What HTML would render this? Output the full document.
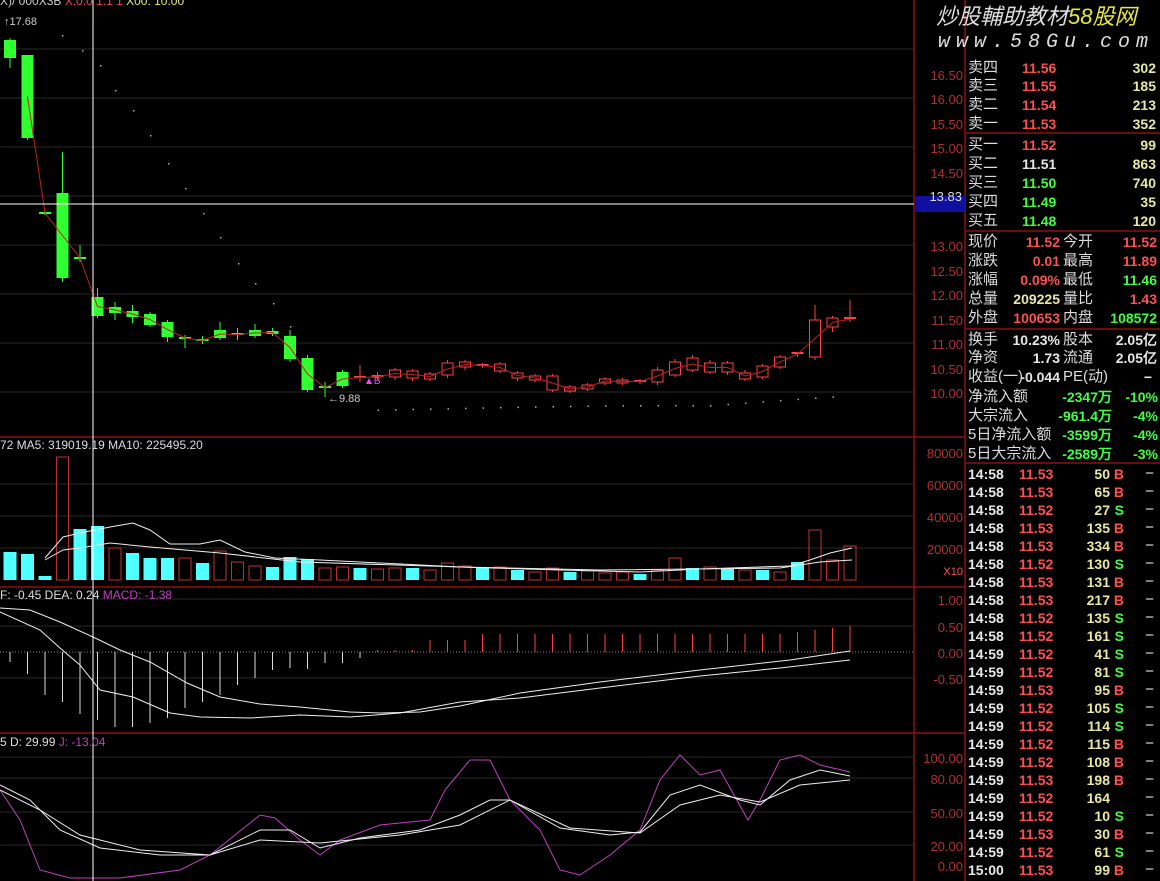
<!DOCTYPE html>
<html><head><meta charset="utf-8">
<style>
body{margin:0;background:#000;width:1160px;height:881px;overflow:hidden;position:relative;font-family:"Liberation Sans","Noto Sans CJK SC",sans-serif;}
.t{position:absolute;white-space:nowrap;line-height:1;}
.ax{position:absolute;right:197px;font-size:13px;color:#b03030;text-align:right;}
.rp{position:absolute;left:966px;width:194px;font-size:15px;}
.row{position:absolute;left:0;width:194px;height:18px;}
.row span{position:absolute;top:0px;white-space:nowrap;line-height:18px;}
.l{left:2px;color:#ddd;}
.w{color:#e8e8e8}.r{color:#ff5050}.g{color:#40ff40}.y{color:#e8e8a0}
.b{font-weight:bold;font-size:14px;font-family:"Liberation Sans",sans-serif}
</style></head><body>
<svg id="s" width="1160" height="881" style="position:absolute;left:0;top:0">
<g stroke="#2a2a2a">
<line x1="0" y1="49" x2="914" y2="49"/><line x1="0" y1="98" x2="914" y2="98"/><line x1="0" y1="147" x2="914" y2="147"/><line x1="0" y1="196" x2="914" y2="196"/><line x1="0" y1="245" x2="914" y2="245"/><line x1="0" y1="294" x2="914" y2="294"/><line x1="0" y1="343" x2="914" y2="343"/><line x1="0" y1="392" x2="914" y2="392"/>
<line x1="0" y1="484" x2="914" y2="484"/><line x1="0" y1="516" x2="914" y2="516"/><line x1="0" y1="548" x2="914" y2="548"/>
<line x1="0" y1="599" x2="914" y2="599"/><line x1="0" y1="626" x2="914" y2="626"/><line x1="0" y1="678" x2="914" y2="678"/>
<line x1="0" y1="757" x2="914" y2="757"/><line x1="0" y1="778" x2="914" y2="778"/><line x1="0" y1="812" x2="914" y2="812"/><line x1="0" y1="845" x2="914" y2="845"/>
</g>
<g stroke="#8a1010" stroke-width="1.5">
<line x1="0" y1="437" x2="965" y2="437"/><line x1="0" y1="587" x2="965" y2="587"/><line x1="0" y1="733" x2="965" y2="733"/>
<line x1="914" y1="0" x2="914" y2="881"/><line x1="965" y1="0" x2="965" y2="881"/>
<line x1="965" y1="133" x2="1160" y2="133"/><line x1="965" y1="231" x2="1160" y2="231"/><line x1="965" y1="329" x2="1160" y2="329"/><line x1="965" y1="463" x2="1160" y2="463"/>
</g>
<line x1="0" y1="652" x2="914" y2="652" stroke="#888" stroke-dasharray="1,2"/>
<g id="c"></g>
<line x1="93" y1="0" x2="93" y2="881" stroke="#fff"/>
<line x1="0" y1="204" x2="914" y2="204" stroke="#fff"/>
<rect x="915" y="196" width="50" height="16" fill="#1010a0"/>
</svg>
<div class="t" style="left:0;top:-5px;font-size:12px;color:#ccc">X)/ 000X3B <span style="color:#ff4060">X:0.0 1.1 1</span> <span style="color:#e8e870">X00: 10.00</span></div>
<div class="t" style="left:4px;top:17px;font-size:11px;color:#ccc">↑17.68</div>
<div class="t" style="left:328px;top:394px;font-size:11px;color:#ccc">←9.88</div>
<div class="t" style="left:0;top:439px;font-size:12px;color:#ddd">72 MA5: 319019.19 MA10: 225495.20</div>
<div class="t" style="left:0;top:589px;font-size:12px;color:#ddd">F: -0.45 DEA: 0.24 <span style="color:#c040c0">MACD: -1.38</span></div>
<div class="t" style="left:0;top:736px;font-size:12px;color:#ddd">5 D: 29.99 <span style="color:#c040c0">J: -13.04</span></div>
<div class="t" style="left:364px;top:377px;font-size:10px;color:#ff40ff">▲<span style="color:#ff40ff">B</span></div>
<div class="ax" style="top:68px">16.50</div><div class="ax" style="top:92px">16.00</div><div class="ax" style="top:117px">15.50</div><div class="ax" style="top:141px">15.00</div><div class="ax" style="top:166px">14.50</div>
<div class="ax" style="top:189px;color:#ddd;right:198px">13.83</div>
<div class="ax" style="top:239px">13.00</div><div class="ax" style="top:264px">12.50</div><div class="ax" style="top:288px">12.00</div><div class="ax" style="top:313px">11.50</div><div class="ax" style="top:337px">11.00</div><div class="ax" style="top:362px">10.50</div><div class="ax" style="top:386px">10.00</div>
<div class="ax" style="top:446px">80000</div><div class="ax" style="top:478px">60000</div><div class="ax" style="top:510px">40000</div><div class="ax" style="top:542px">20000</div>
<div class="ax" style="top:566px;color:#ff5050;font-size:11px">X10</div>
<div class="ax" style="top:593px">1.00</div><div class="ax" style="top:620px">0.50</div><div class="ax" style="top:646px">0.00</div><div class="ax" style="top:672px">-0.50</div>
<div class="ax" style="top:751px">100.00</div><div class="ax" style="top:772px">80.00</div><div class="ax" style="top:806px">50.00</div><div class="ax" style="top:839px">20.00</div><div class="ax" style="top:859px">0.00</div>
<div class="t" style="left:936px;top:6px;font-size:22px;font-style:italic;color:#ddd">炒股輔助教材<span style="color:#e8e840">58股网</span></div>
<div class="t" style="left:938px;top:33px;font-size:20px;font-style:italic;color:#ddd;letter-spacing:6px;font-family:'Liberation Mono',monospace">www.58Gu.com</div>
<div class="rp" style="top:0;height:881px">
<div class="row" style="top:59px"><span class="l">卖四</span><span class="r b" style="left:56px">11.56</span><span class="y b" style="right:4px">302</span></div>
<div class="row" style="top:77px"><span class="l">卖三</span><span class="r b" style="left:56px">11.55</span><span class="y b" style="right:4px">185</span></div>
<div class="row" style="top:96px"><span class="l">卖二</span><span class="r b" style="left:56px">11.54</span><span class="y b" style="right:4px">213</span></div>
<div class="row" style="top:115px"><span class="l">卖一</span><span class="r b" style="left:56px">11.53</span><span class="y b" style="right:4px">352</span></div>
<div class="row" style="top:136px"><span class="l">买一</span><span class="r b" style="left:56px">11.52</span><span class="y b" style="right:4px">99</span></div>
<div class="row" style="top:155px"><span class="l">买二</span><span class="w b" style="left:56px">11.51</span><span class="y b" style="right:4px">863</span></div>
<div class="row" style="top:174px"><span class="l">买三</span><span class="g b" style="left:56px">11.50</span><span class="y b" style="right:4px">740</span></div>
<div class="row" style="top:193px"><span class="l">买四</span><span class="g b" style="left:56px">11.49</span><span class="y b" style="right:4px">35</span></div>
<div class="row" style="top:212px"><span class="l">买五</span><span class="g b" style="left:56px">11.48</span><span class="y b" style="right:4px">120</span></div>
<div class="row" style="top:233px"><span class="l">现价</span><span class="r b" style="right:100px">11.52</span><span class="l" style="left:97px">今开</span><span class="r b" style="right:3px">11.52</span></div>
<div class="row" style="top:252px"><span class="l">涨跌</span><span class="r b" style="right:100px">0.01</span><span class="l" style="left:97px">最高</span><span class="r b" style="right:3px">11.89</span></div>
<div class="row" style="top:271px"><span class="l">涨幅</span><span class="r b" style="right:100px">0.09%</span><span class="l" style="left:97px">最低</span><span class="g b" style="right:3px">11.46</span></div>
<div class="row" style="top:290px"><span class="l">总量</span><span class="y b" style="right:100px">209225</span><span class="l" style="left:97px">量比</span><span class="r b" style="right:3px">1.43</span></div>
<div class="row" style="top:309px"><span class="l">外盘</span><span class="r b" style="right:100px">100653</span><span class="l" style="left:97px">内盘</span><span class="g b" style="right:3px">108572</span></div>
<div class="row" style="top:331px"><span class="l">换手</span><span class="w b" style="right:100px">10.23%</span><span class="l" style="left:97px">股本</span><span class="w b" style="right:3px">2.05亿</span></div>
<div class="row" style="top:349px"><span class="l">净资</span><span class="w b" style="right:100px">1.73</span><span class="l" style="left:97px">流通</span><span class="w b" style="right:3px">2.05亿</span></div>
<div class="row" style="top:368px"><span class="l">收益(一)</span><span class="w b" style="right:100px">-0.044</span><span class="l" style="left:97px">PE(动)</span><span class="w b" style="right:8px">−</span></div>
<div class="row" style="top:388px"><span class="l">净流入额</span><span class="g b" style="right:48px">-2347万</span><span class="g b" style="right:2px">-10%</span></div>
<div class="row" style="top:407px"><span class="l">大宗流入</span><span class="g b" style="right:48px">-961.4万</span><span class="g b" style="right:2px">-4%</span></div>
<div class="row" style="top:426px"><span class="l">5日净流入额</span><span class="g b" style="right:48px">-3599万</span><span class="g b" style="right:2px">-4%</span></div>
<div class="row" style="top:445px"><span class="l">5日大宗流入</span><span class="g b" style="right:48px">-2589万</span><span class="g b" style="right:2px">-3%</span></div>
<div id="ticks"></div>
</div>
<script>
var T=[["14:58","11.53","50","B"],["14:58","11.53","65","B"],["14:58","11.52","27","S"],["14:58","11.53","135","B"],["14:58","11.53","334","B"],["14:58","11.52","130","S"],["14:58","11.53","131","B"],["14:58","11.53","217","B"],["14:58","11.52","135","S"],["14:58","11.52","161","S"],["14:59","11.52","41","S"],["14:59","11.52","81","S"],["14:59","11.53","95","B"],["14:59","11.52","105","S"],["14:59","11.52","114","S"],["14:59","11.52","115","B"],["14:59","11.52","108","B"],["14:59","11.53","198","B"],["14:59","11.52","164",""],["14:59","11.52","10","S"],["14:59","11.53","30","B"],["14:59","11.52","61","S"],["15:00","11.53","99","B"]];
var h="";T.forEach(function(r,i){var y=465+i*18;h+='<div class="row" style="top:'+y+'px"><span class="w b" style="left:2px">'+r[0]+'</span><span class="r b" style="left:53px">'+r[1]+'</span><span class="y b" style="right:50px">'+r[2]+'</span><span class="b '+(r[3]=="B"?"r":"g")+'" style="right:36px">'+r[3]+'</span><span class="w" style="right:6px">−</span></div>';});
document.getElementById("ticks").innerHTML=h;
var C=[[40,58,38,68,'g'],[55,138,55,140,'g'],[213,213,211,215,'d'],[193,278,152,282,'g'],[258,258,245,262,'d'],[297,316,288,318,'g'],[307,313,302,320,'g'],[311,317,305,323,'g'],[314,325,312,327,'g'],[322,337,320,342,'g'],[338,338,335,348,'d'],[340,341,336,344,'d'],[330,338,322,340,'g'],[334,335,328,340,'d'],[330,336,324,338,'g'],[331,334,328,336,'g'],[336,359,330,362,'g'],[358,390,355,392,'g'],[387,388,382,397,'d'],[372,386,370,388,'g'],[377,378,365,382,'dr'],[376,378,372,380,'dr'],[370,377,368,380,'r'],[371,378,369,381,'r'],[374,379,372,381,'r'],[363,375,360,378,'r'],[362,367,360,370,'r'],[365,366,363,368,'dr'],[364,371,362,373,'r'],[373,378,371,381,'r'],[376,380,374,382,'r'],[376,390,374,392,'r'],[387,391,385,393,'r'],[385,389,383,391,'r'],[379,383,377,385,'r'],[380,383,378,385,'r'],[381,382,379,384,'dr'],[370,382,367,385,'r'],[362,375,359,377,'r'],[358,370,355,372,'r'],[363,372,360,374,'r'],[363,372,361,375,'r'],[373,379,370,381,'r'],[366,377,364,379,'r'],[357,367,355,369,'r'],[353,355,352,357,'dr'],[320,357,305,360,'r'],[318,327,316,332,'r'],[318,320,300,322,'dr']];
var V=[552,554,576,457,529,526,548,553,558,558,558,563,551,562,566,567,557,559,568,567,568,569,568,568,570,563,566,568,567,570,572,568,572,571,573,572,574,570,558,568,567,569,570,570,572,562,530,560,546];
var Vt="cccrccrcccrcrrrcccrrcrrcrrrcrcrrcrrrcrrcrcrcrcrrr";
var s="";function X(i){return 10+i*17.5;}
C.forEach(function(c,i){var x=X(i);
 if(c[4]=='g'){s+='<line x1="'+x+'" y1="'+c[2]+'" x2="'+x+'" y2="'+c[3]+'" stroke="#30ff30"/><rect x="'+(x-6)+'" y="'+c[0]+'" width="12" height="'+(c[1]-c[0])+'" fill="#30ff30"/>';}
 else if(c[4]=='r'){s+='<line x1="'+x+'" y1="'+c[2]+'" x2="'+x+'" y2="'+c[0]+'" stroke="#ff4040"/><line x1="'+x+'" y1="'+c[1]+'" x2="'+x+'" y2="'+c[3]+'" stroke="#ff4040"/><rect x="'+(x-5.5)+'" y="'+c[0]+'" width="11" height="'+(c[1]-c[0])+'" fill="none" stroke="#ff4040"/>';}
 else {var col=c[4]=='dr'?'#ff4040':'#30ff30';s+='<line x1="'+x+'" y1="'+c[2]+'" x2="'+x+'" y2="'+c[3]+'" stroke="'+col+'"/><line x1="'+(x-6)+'" y1="'+c[0]+'" x2="'+(x+6)+'" y2="'+c[0]+'" stroke="'+col+'" stroke-width="2"/>';}
});
var ma="";C.forEach(function(c,i){if(i>0)ma+=X(i)+","+((c[0]+c[1])/2)+" ";});
s+='<polyline points="'+ma+'" fill="none" stroke="#c02020"/>';
var dots=[[62,35],[82,50],[100,65],[115,90],[133,110],[150,135],[168,163],[185,188],[203,213],[220,237],[238,263],[255,283],[273,303],[290,326]];
for(var i=21;i<48;i++)dots.push([X(i),408+Math.sin(i/8)*3-(i>40?(i-40)*1.5:0)]);
dots.forEach(function(d){s+='<rect x="'+d[0]+'" y="'+d[1]+'" width="1.5" height="1.5" fill="#aaa"/>';});
V.forEach(function(v,i){var x=X(i);if(Vt[i]=='c')s+='<rect x="'+(x-6.5)+'" y="'+v+'" width="13" height="'+(580-v)+'" fill="#50ffff"/>';else s+='<rect x="'+(x-6)+'" y="'+v+'" width="12" height="'+(580-v)+'" fill="none" stroke="#c03030"/>';});
var M=[662,674,695,702,714,720,727,727,723,718,708,702,695,685,678,670,668,669,663,663,658];
M.forEach(function(m,i){var x=X(i);s+='<line x1="'+x+'" y1="652" x2="'+x+'" y2="'+m+'" stroke="#ddd"/>';});
for(var i=21;i<49;i++){var x=X(i);var t=i<24?650:(i<27?640:634)-(i>44?(i-44)*2:0);s+='<line x1="'+x+'" y1="652" x2="'+x+'" y2="'+t+'" stroke="#ff4040"/>';}
function pl(p,c){s+='<polyline points="'+p+'" fill="none" stroke="'+c+'"/>';}
pl("45,558 63,537 80,533 110,527 133,523 150,530 170,544 200,544 220,540 245,552 275,558 320,560 380,563 460,567 560,570 640,572 700,569 760,567 790,566 810,560 830,553 852,548","#eee");
pl("45,560 63,550 80,548 110,543 150,547 220,553 300,562 460,567 600,570 780,568 820,562 852,560","#eee");
pl("0,608 30,610 60,622 93,637 120,650 150,662 187,683 220,697 260,704 300,707 350,712 380,713 420,712 460,706 520,693 600,682 700,670 790,660 850,651","#eee");
pl("0,612 40,630 60,648 80,665 100,690 133,697 170,713 200,717 250,718 300,715 350,717 400,713 460,702 520,698 600,688 700,676 780,668 850,660","#eee");
pl("0,790 20,820 40,870 70,878 120,878 180,870 210,855 260,815 275,818 300,840 320,855 340,840 380,825 430,820 445,790 470,760 490,760 510,800 540,830 560,870 580,875 610,855 640,830 660,780 680,755 700,775 720,770 748,820 760,800 780,760 800,755 820,765 850,772","#c040c0");
pl("0,785 30,800 60,830 100,848 160,855 210,855 260,830 290,830 320,848 360,838 420,830 460,815 490,800 510,800 560,828 610,835 640,832 670,795 700,785 740,800 760,805 790,780 820,770 850,776","#eee");
pl("0,790 40,810 80,835 140,850 210,855 260,840 320,843 400,835 460,825 510,800 570,828 640,833 680,805 720,795 760,802 800,785 850,780","#eee");
document.getElementById("c").innerHTML=s;
</script>
</body></html>
